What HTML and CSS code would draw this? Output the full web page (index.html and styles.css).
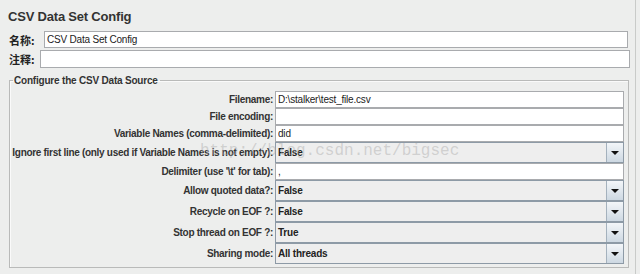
FILE: index.html
```html
<!DOCTYPE html>
<html lang="zh">
<head>
    <meta charset="UTF-8">
    <title>CSV Data Set Config</title>
    <link rel="stylesheet" href="styles.css">
</head>
<body>
    <div class="panel">
        <h1 class="title">CSV Data Set Config</h1>

        <div class="name-row">
            <label class="name-label">名称:</label>
            <input class="field" type="text" value="CSV Data Set Config">
        </div>
        <div class="name-row comment-row">
            <label class="name-label">注释:</label>
            <input class="field" type="text" value="">
        </div>

        <fieldset class="source">
            <legend>Configure the CSV Data Source</legend>
            <div class="form-grid">
                <label>Filename:</label>
                <input class="field" type="text" value="D:\stalker\test_file.csv">

                <label>File encoding:</label>
                <input class="field" type="text" value="">

                <label>Variable Names (comma-delimited):</label>
                <input class="field" type="text" value="did">

                <label class="tall">Ignore first line (only used if Variable Names is not empty):</label>
                <div class="combo"><span>False</span><i class="arrow"></i></div>

                <label>Delimiter (use '\t' for tab):</label>
                <input class="field" type="text" value=",">

                <label class="tall">Allow quoted data?:</label>
                <div class="combo"><span>False</span><i class="arrow"></i></div>

                <label class="tall">Recycle on EOF ?:</label>
                <div class="combo"><span>False</span><i class="arrow"></i></div>

                <label class="tall">Stop thread on EOF ?:</label>
                <div class="combo"><span>True</span><i class="arrow"></i></div>

                <label class="tall">Sharing mode:</label>
                <div class="combo"><span>All threads</span><i class="arrow"></i></div>
            </div>
        </fieldset>
    </div>

    <div class="watermark">http://blog.csdn.net/bigsec</div>
</body>
</html>
```

FILE: styles.css
```css
body {
    margin: 0;
    background: #edeeed;
    font-family: "Liberation Sans", Arial, "Noto Sans CJK SC", sans-serif;
    font-size: 10px;
    letter-spacing: -0.2px;
    color: #222;
    position: relative;
    width: 640px;
    height: 274px;
    overflow: hidden;
}
.panel {
    width: 636px;
    height: 274px;
    box-sizing: border-box;
    border-right: 1px solid #c9cbc9;
}
.title {
    margin: 0;
    padding: 8px 8px 0;
    height: 23px;
    font-size: 13px;
    line-height: 17px;
    letter-spacing: -0.2px;
    font-weight: bold;
    color: #333;
}
.name-row {
    display: flex;
    align-items: center;
    height: 17px;
    margin-right: 7px;
    margin-bottom: 2px;
}
.comment-row {
    height: 18px;
    margin-right: 5px;
}
.name-label {
    width: 35px;
    padding-left: 9px;
    flex: none;
    font-weight: bold;
    font-family: "Noto Sans CJK SC", sans-serif;
    font-size: 11px;
    letter-spacing: 0;
    color: #222;
}
.comment-row .name-label {
    width: 31px;
}
.name-row .field {
    flex: 1;
    height: 100%;
}
.field {
    box-sizing: border-box;
    height: 17px;
    margin: 0;
    padding: 0 2px;
    border: 1px solid #a9abae;
    background: #fff;
    font-family: "Liberation Sans", Arial, sans-serif;
    font-size: 10px;
    letter-spacing: -0.2px;
    color: #222;
    outline: none;
}
.source {
    margin: 6px 6px 0 9px;
    padding: 0 4px 3px 0;
    border: 1px solid #b9bab9;
    box-shadow: inset 1px 1px 0 #fafafa;
}
.source legend {
    margin-left: 3px;
    padding: 0 2px 0 1px;
    font-weight: bold;
    font-size: 10px;
    line-height: 13px;
    color: #333;
}
.form-grid {
    display: grid;
    grid-template-columns: 263px 1fr;
    column-gap: 2px;
    padding-top: 4px;
}
.form-grid label {
    font-weight: bold;
    color: #333;
    text-align: right;
    line-height: 17px;
    letter-spacing: -0.3px;
    white-space: nowrap;
}
.form-grid label.tall {
    line-height: 21px;
}
.form-grid .field {
    width: 100%;
}
.combo {
    box-sizing: border-box;
    height: 21px;
    display: flex;
    align-items: center;
    border: 1px solid #8d9aa6;
    background: #eeeeee;
    font-weight: bold;
    color: #222;
}
.combo span {
    flex: 1;
    padding-left: 2px;
}
.arrow {
    width: 16px;
    height: 19px;
    border-left: 1px solid #a4b1bd;
    background: linear-gradient(#f3f6f9, #cdd8e2);
    position: relative;
}
.arrow::after {
    content: "";
    position: absolute;
    left: 4px;
    top: 8px;
    border-left: 4px solid transparent;
    border-right: 4px solid transparent;
    border-top: 4px solid #111;
}
.watermark {
    position: absolute;
    left: 200px;
    top: 141px;
    font-family: "Liberation Mono", "Courier New", monospace;
    font-size: 16px;
    line-height: 20px;
    letter-spacing: 0;
    color: rgba(170, 170, 170, 0.45);
    pointer-events: none;
}
```
